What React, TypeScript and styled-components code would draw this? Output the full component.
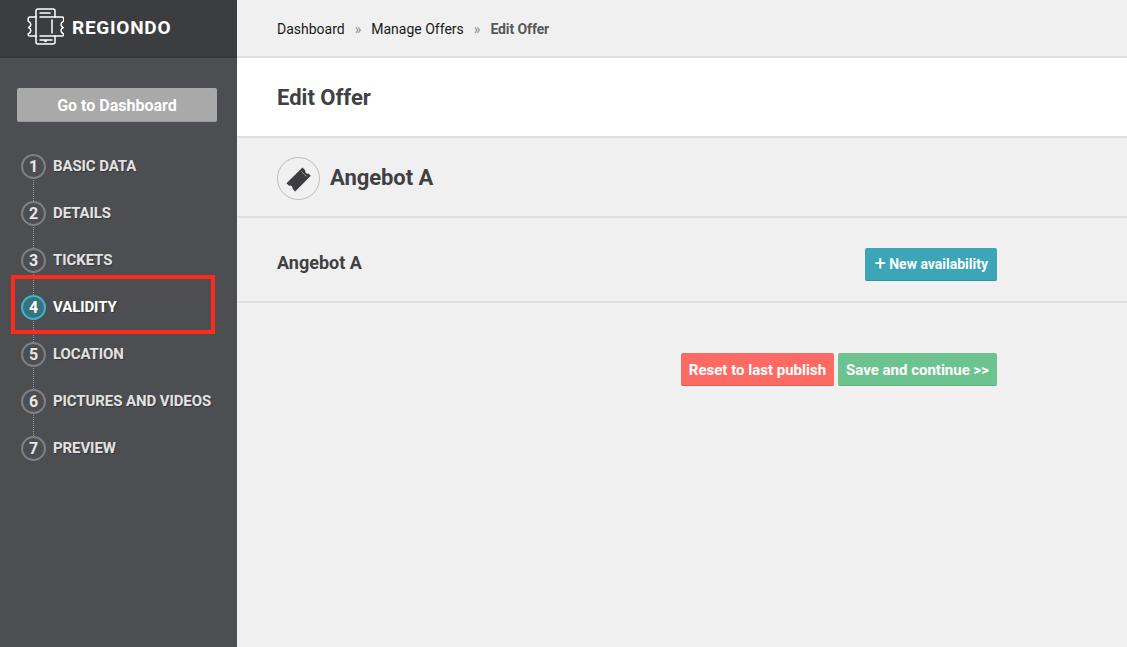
import React from "react";
import styled, { createGlobalStyle } from "styled-components";

const steps = ["BASIC DATA", "DETAILS", "TICKETS", "VALIDITY", "LOCATION", "PICTURES AND VIDEOS", "PREVIEW"];

const App = () => {
  return (
    <>
      <GlobalStyle />
      <Page>
        <Sidebar>
          <LogoBar>
            <svg width="38" height="38" viewBox="0 0 38 38" fill="none" stroke="#fff" strokeWidth="1.5" strokeLinecap="round" strokeLinejoin="round">
              <path d="M10 28V3C10 1.9 10.9 1 12 1H27C28.1 1 29 1.9 29 3V9" />
              <path d="M10 28V34C10 35.1 10.9 36 12 36H27C28.1 36 29 35.1 29 34V28" />
              <path d="M14 5H24" />
              <path d="M10 9H4C2.9 9 2.2 9.7 2.2 10.8V13.2C3.8 14 4.8 15.2 4.8 16.6C4.8 18 3.8 19 2.6 19.6C3.8 20.2 4.8 21.2 4.8 22.6C4.8 24 3.8 25.2 2.2 26V27C2.2 27.6 2.9 28 4 28H10" />
              <path d="M14 9H36C37 9 37.6 9.7 37.6 10.8V13.2C36 14 35 15.2 35 16.6C35 18 36 19 37.2 19.6C36 20.2 35 21.2 35 22.6C35 24 36 25.2 37.6 26V27C37.6 27.6 37 28 36 28H14" />
              <path d="M26 12V25M14 32H26" />
              <circle cx="19.5" cy="33" r="0.6" fill="#fff" />
            </svg>
            <LogoText>REGIONDO</LogoText>
          </LogoBar>
          <SideBody>
            <DashButton>Go to Dashboard</DashButton>
            <StepList>
              {steps.map((label, index) => (
                <Step key={label} $last={index === steps.length - 1}>
                  <StepNumber $active={index === 3}>{index + 1}</StepNumber>
                  <StepLabel $active={index === 3}>{label}</StepLabel>
                </Step>
              ))}
            </StepList>
            <Highlight />
          </SideBody>
        </Sidebar>
        <Main>
          <Breadcrumb>
            <Crumb>Dashboard</Crumb>
            <Sep>»</Sep>
            <Crumb>Manage Offers</Crumb>
            <Sep>»</Sep>
            <CrumbCurrent>Edit Offer</CrumbCurrent>
          </Breadcrumb>
          <TitleBar>
            <Title>Edit Offer</Title>
          </TitleBar>
          <OfferHeader>
            <IconCircle>
              <svg width="26" height="26" viewBox="0 0 26 26">
                <path
                  d="M16.5 1.5L19.2 4.2Q18.8 6 20 7Q21 8 22.4 7.4L24.8 9.8L9.2 25.6L6.6 23Q7 21.4 5.8 20.2Q4.6 19.2 3 19.7L0.5 17.2Z"
                  fill="#3d3d3f"
                />
                <path d="M15.6 5.6L20.6 10.6" stroke="#f0f0f0" strokeWidth="0.8" strokeDasharray="1.4 1.2" fill="none" />
              </svg>
            </IconCircle>
            <OfferName>Angebot A</OfferName>
          </OfferHeader>
          <OfferRow>
            <RowName>Angebot A</RowName>
            <ActionButton $bg="#3ca5b8" $edge="#3292a4" $size={14} $pad={9}>
              <PlusMark>+</PlusMark> New availability
            </ActionButton>
          </OfferRow>
          <Footer>
            <ActionButton $bg="#fc6b63" $edge="#de5a54" $size={15} $pad={8}>Reset to last publish</ActionButton>
            <ActionButton $bg="#6dc390" $edge="#5eae7f" $size={15} $pad={8}>Save and continue &gt;&gt;</ActionButton>
          </Footer>
        </Main>
      </Page>
    </>
  );
};

const GlobalStyle = createGlobalStyle`
  html, body {
    margin: 0;
    padding: 0;
    background: #f0f0f0;
  }
  body {
    font-family: Roboto, "Liberation Sans", sans-serif;
  }
  * {
    box-sizing: border-box;
  }
`;

const Page = styled.div`
  display: flex;
  width: 1127px;
  height: 647px;
  overflow: hidden;
`;

const Sidebar = styled.aside`
  width: 237px;
  flex-shrink: 0;
  display: flex;
  flex-direction: column;
  background-color: #4d4e52;
`;

const LogoBar = styled.div`
  height: 58px;
  display: flex;
  align-items: center;
  gap: 8px;
  padding: 0 0 2px 26px;
  background-color: #3c3d3f;
  border-bottom: 2px solid #37383a;
`;

const LogoText = styled.span`
  font-size: 19px;
  font-weight: 700;
  letter-spacing: 0.75px;
  color: #fff;
`;

const SideBody = styled.div`
  position: relative;
  flex: 1;
  padding: 30px 20px 0 17px;
`;

const DashButton = styled.button`
  display: block;
  width: 200px;
  height: 34px;
  padding: 1px 0 0;
  border: none;
  border-radius: 2px;
  background-color: #a9a9a9;
  border-bottom: 1px solid #999;
  color: #fff;
  font-family: inherit;
  font-size: 16px;
  font-weight: 700;
`;

const StepList = styled.div`
  margin-top: 32px;
  margin-left: 4px;
`;

const Step = styled.div<{ $last: boolean }>`
  position: relative;
  height: 47px;
  display: flex;
  align-items: flex-start;
  gap: 7px;
  &::after {
    content: "";
    display: ${({ $last }) => ($last ? "none" : "block")};
    position: absolute;
    left: 12px;
    top: 26px;
    height: 21px;
    border-left: 1px dotted #96979a;
  }
`;

const StepNumber = styled.span<{ $active: boolean }>`
  width: 25px;
  height: 25px;
  flex-shrink: 0;
  display: flex;
  align-items: center;
  justify-content: center;
  border-radius: 50%;
  border: 2px solid ${({ $active }) => ($active ? "#3fb5c9" : "#7f8083")};
  background-color: ${({ $active }) => ($active ? "#37727e" : "transparent")};
  color: ${({ $active }) => ($active ? "#fff" : "#e6e6e6")};
  font-size: 16px;
  font-weight: 700;
`;

const StepLabel = styled.span<{ $active: boolean }>`
  font-size: 15px;
  line-height: 24px;
  font-weight: 700;
  letter-spacing: -0.1px;
  white-space: nowrap;
  color: ${({ $active }) => ($active ? "#fff" : "#e2e2e2")};
  text-shadow: 1px 1px 1px rgba(0, 0, 0, 0.3);
`;

const Highlight = styled.div`
  position: absolute;
  left: 11px;
  top: 217px;
  width: 204px;
  height: 59px;
  border: 4px solid #ff2a1c;
`;

const Main = styled.main`
  flex: 1;
  display: flex;
  flex-direction: column;
  background-color: #f0f0f0;
`;

const Breadcrumb = styled.nav`
  height: 58px;
  display: flex;
  align-items: center;
  padding: 2px 0 0 40px;
  border-bottom: 2px solid #e0e0e0;
  font-size: 14px;
`;

const Crumb = styled.span`
  color: #1a1a1a;
`;

const CrumbCurrent = styled.span`
  color: #58585a;
  font-weight: 700;
  letter-spacing: -0.1px;
`;

const Sep = styled.span`
  margin: 0 10px;
  color: #8e8e8e;
`;

const TitleBar = styled.div`
  height: 80px;
  display: flex;
  align-items: center;
  padding-left: 40px;
  background-color: #fff;
  border-bottom: 2px solid #e0e0e0;
`;

const Title = styled.h1`
  margin: 0;
  font-size: 22px;
  font-weight: 700;
  color: #404042;
`;

const OfferHeader = styled.div`
  height: 80px;
  display: flex;
  align-items: center;
  gap: 10px;
  padding: 1px 0 0 40px;
  border-bottom: 2px solid #e0e0e0;
`;

const IconCircle = styled.span`
  width: 43px;
  height: 43px;
  margin-top: 2px;
  display: flex;
  align-items: center;
  justify-content: center;
  border-radius: 50%;
  border: 1px solid #bdbdbd;
`;

const OfferName = styled.h2`
  margin: 0;
  font-size: 22px;
  font-weight: 700;
  letter-spacing: -0.05px;
  color: #404042;
`;

const OfferRow = styled.div`
  width: 100%;
  height: 85px;
  display: flex;
  align-items: center;
  justify-content: space-between;
  padding: 9px 130px 0 40px;
  border-bottom: 2px solid #e0e0e0;
`;

const RowName = styled.span`
  margin-bottom: 4px;
  font-size: 18px;
  font-weight: 700;
  color: #404042;
`;

const ActionButton = styled.button<{ $bg: string; $edge: string; $size: number; $pad: number }>`
  height: 33px;
  padding: 1px ${({ $pad }) => $pad}px 0;
  border: none;
  border-bottom: 1px solid ${({ $edge }) => $edge};
  border-radius: 2px;
  background-color: ${({ $bg }) => $bg};
  color: #fff;
  font-family: inherit;
  font-size: ${({ $size }) => $size}px;
  font-weight: 700;
  white-space: nowrap;
`;

const PlusMark = styled.span`
  font-size: 20px;
  font-weight: 400;
  line-height: 14px;
  vertical-align: -1px;
`;

const Footer = styled.div`
  display: flex;
  justify-content: flex-end;
  gap: 4px;
  margin-top: 50px;
  padding-right: 130px;
`;

export default App;
